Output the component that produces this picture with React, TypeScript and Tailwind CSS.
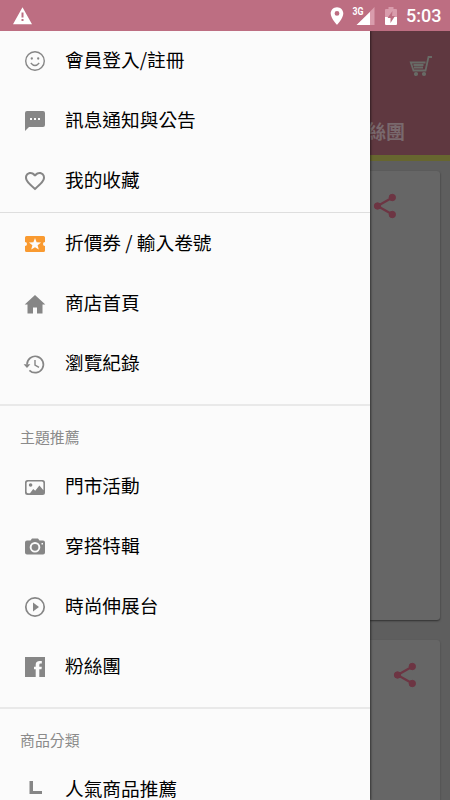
import type { ReactNode } from "react";

function Icon({ children, className = "text-[#868686]" }: { children: ReactNode; className?: string }) {
  return (
    <svg viewBox="0 0 24 24" className={`ml-[23px] mr-[18px] size-6 shrink-0 ${className}`} fill="currentColor">
      {children}
    </svg>
  );
}

function Row({ icon, label }: { icon: ReactNode; label: string }) {
  return (
    <li className="flex h-[60px] shrink-0 items-center">
      {icon}
      <span className="-mt-1 whitespace-nowrap text-[18.7px] leading-6 text-black">{label}</span>
    </li>
  );
}

function Heading({ children }: { children: ReactNode }) {
  return <h2 className="ml-5 text-[14.9px] leading-5 text-[#8a8a8a]">{children}</h2>;
}

function Share({ className }: { className: string }) {
  return (
    <svg viewBox="0 0 24 26" className={`h-[26px] w-6 ${className}`} fill="#6d3543" stroke="#6d3543">
      <path d="M19.500 4.500 4.500 13l15 8.500" fill="none" strokeWidth="2.200" />
      <circle cx="4.500" cy="13" r="3.200" />
      <circle cx="19.300" cy="4.500" r="3.200" />
      <circle cx="19.300" cy="21.500" r="3.200" />
    </svg>
  );
}

function StatusBar() {
  return (
    <header className="flex h-[31px] shrink-0 items-center bg-[#bd6e82] text-white">
      <svg viewBox="0 0 20 18" className="ml-3 h-[18px] w-5" fill="currentColor">
        <path fillRule="evenodd" d="M10.500.3 20 17.200H1zM9.500 5.500v5h2v-5zm0 6.500v2h2v-2z" />
      </svg>
      <svg viewBox="0 0 14 18" className="ml-[298px] h-[18px] w-[14px]" fill="currentColor">
        <path fillRule="evenodd" d="M7 .2C3.400.2.700 3 .700 6.600.700 11.300 7 18 7 18s6.300-6.700 6.300-11.400C13.300 3 10.600.2 7 .2zM7 4a2.400 2.400 0 1 1 0 4.800A2.400 2.400 0 0 1 7 4z" />
      </svg>
      <svg viewBox="0 0 24 20" className="ml-2 h-5 w-6">
        <path d="M22.500 1v18H5z" fill="#d99cac" />
        <path d="M18 6v13H4.500z" fill="white" />
        <path d="M0 0h12v9.500H0z" fill="#bd6e82" />
        <text x="0.500" y="9" fill="white" fontFamily="Roboto" fontSize="10" fontWeight="700" textLength="11" lengthAdjust="spacingAndGlyphs">3G</text>
      </svg>
      <svg viewBox="0 0 12 18" className="ml-[9px] h-[18px] w-3">
        <path d="M1 2h2.500V0h5v2H11q1 0 1 1v7H0V3q0-1 1-1z" fill="#d99cac" />
        <path d="M0 10h12v7q0 1-1 1H1q-1 0-1-1z" fill="white" />
        <path d="M7.500 4 2.500 11h3v5l4.500-7H7z" fill="#bd6e82" />
      </svg>
      <span className="ml-[9px] mt-px font-[Roboto] text-[18px] font-medium leading-5">5:03</span>
    </header>
  );
}

function Drawer() {
  return (
    <aside className="z-10 flex w-[370px] shrink-0 flex-col overflow-hidden bg-[#fbfbfb] shadow-[1px_0_2px_rgba(0,0,0,0.5)]">
      <ul>
        <Row label="會員登入/註冊" icon={<Icon><circle cx="12" cy="12" r="9.300" fill="none" stroke="currentColor" strokeWidth="1.400" /><circle cx="8.800" cy="9.500" r="1.150" /><circle cx="15.200" cy="9.500" r="1.150" /><path d="M7.800 14q4.200 5 8.400 0" fill="none" stroke="currentColor" strokeWidth="1.300" /></Icon>} />
        <Row label="訊息通知與公告" icon={<Icon><path fillRule="evenodd" d="M4 2h16q2 0 2 2v12q0 2-2 2H6l-4 4V4q0-2 2-2zm3 7v2h2V9zm4 0v2h2V9zm4 0v2h2V9z" /></Icon>} />
        <Row label="我的收藏" icon={<Icon><path d="M16.500 3c-1.740 0-3.410.81-4.500 2.090C10.910 3.810 9.240 3 7.500 3 4.420 3 2 5.420 2 8.500c0 3.780 3.400 6.860 8.550 11.540L12 21.350l1.450-1.320C18.600 15.360 22 12.280 22 8.500 22 5.420 19.580 3 16.500 3zm-4.400 15.550-.1.100-.1-.1C7.140 14.240 4 11.390 4 8.500 4 6.500 5.500 5 7.500 5c1.540 0 3.040.99 3.570 2.360h1.870C13.460 5.990 14.960 5 16.500 5c2 0 3.500 1.500 3.500 3.500 0 2.890-3.140 5.740-7.900 10.050z" /></Icon>} />
      </ul>
      <hr className="mb-px mt-px h-0 shrink-0 border-t border-[#dedede]" />
      <ul>
        <Row label="折價券 / 輸入卷號" icon={<Icon className="text-[#f99a30]"><path fillRule="evenodd" d="M3.500 4h17Q22 4 22 5.500V10a2 2 0 0 0 0 4v4.500q0 1.500-1.500 1.500h-17Q2 20 2 18.500V14a2 2 0 0 0 0-4V5.500Q2 4 3.500 4zM12 6l-1.600 4.200-4.500.2 3.500 2.800-1.200 4.400L12 15.200l3.800 2.400-1.200-4.400 3.500-2.800-4.500-.2z" /></Icon>} />
        <Row label="商店首頁" icon={<Icon><path d="M10 21.500v-6h4v6h5.500v-9H22.300L12 3 1.700 12.500h2.800v9z" /></Icon>} />
        <Row label="瀏覽紀錄" icon={<Icon><path d="M4 12.500a8.200 8.200 0 1 1 2.400 5.800" fill="none" stroke="currentColor" strokeWidth="1.700" /><path d="M.6 12.200h6.800L4 16z" /><path d="M12 8v5l4 2.400" fill="none" stroke="currentColor" strokeWidth="1.400" /></Icon>} />
      </ul>
      <hr className="mb-[21px] mt-[10px] h-0 shrink-0 border-t-2 border-[#e9e9e9]" />
      <Heading>主題推薦</Heading>
      <ul className="mt-[10px]">
        <Row label="門市活動" icon={<Icon><path fillRule="evenodd" d="M4.500 5h15Q22 5 22 7.500v10q0 2.500-2.500 2.500h-15Q2 20 2 17.500v-10Q2 5 4.500 5zm.6 1.600q-1.500 0-1.500 1.500v8.500q0 1.400 1.400 1.700H7l3.200-4.200 2 1.600 4.200-5.100 4 4.700V8.100q0-1.500-1.500-1.500zM7.600 8.200a1.800 1.800 0 1 1 0 3.600 1.800 1.800 0 0 1 0-3.600z" /></Icon>} />
        <Row label="穿搭特輯" icon={<Icon><path fillRule="evenodd" d="M4 5.500h3.500L9 3.500h6l1.500 2H20q2 0 2 2v10q0 2-2 2H4q-2 0-2-2v-10q0-2 2-2zM12 7a5.300 5.300 0 1 0 0 10.600A5.300 5.300 0 0 0 12 7zm0 1.900a3.400 3.400 0 1 1 0 6.800 3.400 3.400 0 0 1 0-6.800zM18.500 8v1.500H20V8z" /></Icon>} />
        <Row label="時尚伸展台" icon={<Icon><circle cx="12" cy="12" r="9.200" fill="none" stroke="currentColor" strokeWidth="1.700" /><path d="M10 7.500v9l6-4.500z" /></Icon>} />
        <Row label="粉絲團" icon={<Icon><path d="M2 2h20v20h-5.700v-7.700h2.200l.3-2.600h-2.500v-2q0-1.200 1.200-1.200h1.300V6h-2q-4.100 0-4.100 3.700v2H11v2.600h1.700V22H2z" /></Icon>} />
      </ul>
      <hr className="mb-[21px] mt-[10px] h-0 shrink-0 border-t-2 border-[#e9e9e9]" />
      <Heading>商品分類</Heading>
      <ul className="mt-[10px]">
        <Row label="人氣商品推薦" icon={<Icon><path d="M6.500 3H10v10h9v3H6.500z" /></Icon>} />
      </ul>
    </aside>
  );
}

function DimmedPage() {
  return (
    <main className="flex min-w-0 flex-1 flex-col overflow-hidden bg-[#5e5e5e]">
      <div className="flex h-[124px] shrink-0 flex-col bg-[#5f3840]">
        <svg viewBox="0 0 24 22" className="ml-[39px] mt-6 h-[22px] w-6 shrink-0" fill="none" stroke="#686b66" strokeWidth="1.800">
          <path d="M23 2h-3.500L16.500 15.500H4.500L1.800 7.500H16.500M4.500 10H14.500M5 12.500H14" />
          <circle cx="7" cy="19" r="1.200" fill="#686b66" />
          <circle cx="15" cy="19" r="1.200" fill="#686b66" />
        </svg>
        <span className="-ml-[3px] mt-[42px] whitespace-nowrap text-[19px] font-bold leading-6 text-[#79696d]">絲團</span>
      </div>
      <div className="h-1.5 shrink-0 bg-[#67662f]" />
      <section className="mr-2.5 mt-2.5 h-[449px] shrink-0 rounded-r-[3px] bg-[#666] pt-[22px] shadow-[0_1px_2px_rgba(0,0,0,0.5)]">
        <Share className="ml-[3px]" />
      </section>
      <section className="mr-2.5 mt-5 h-[170px] shrink-0 rounded-tr-[3px] bg-[#666] pt-[22px] shadow-[0_1px_2px_rgba(0,0,0,0.3)]">
        <Share className="ml-[23px]" />
      </section>
    </main>
  );
}

export default function App() {
  return (
    <div className="flex h-[800px] w-[450px] flex-col overflow-hidden font-['Noto_Sans_CJK_TC','Noto_Sans',sans-serif]">
      <StatusBar />
      <div className="flex min-h-0 flex-1 overflow-hidden">
        <Drawer />
        <DimmedPage />
      </div>
    </div>
  );
}
